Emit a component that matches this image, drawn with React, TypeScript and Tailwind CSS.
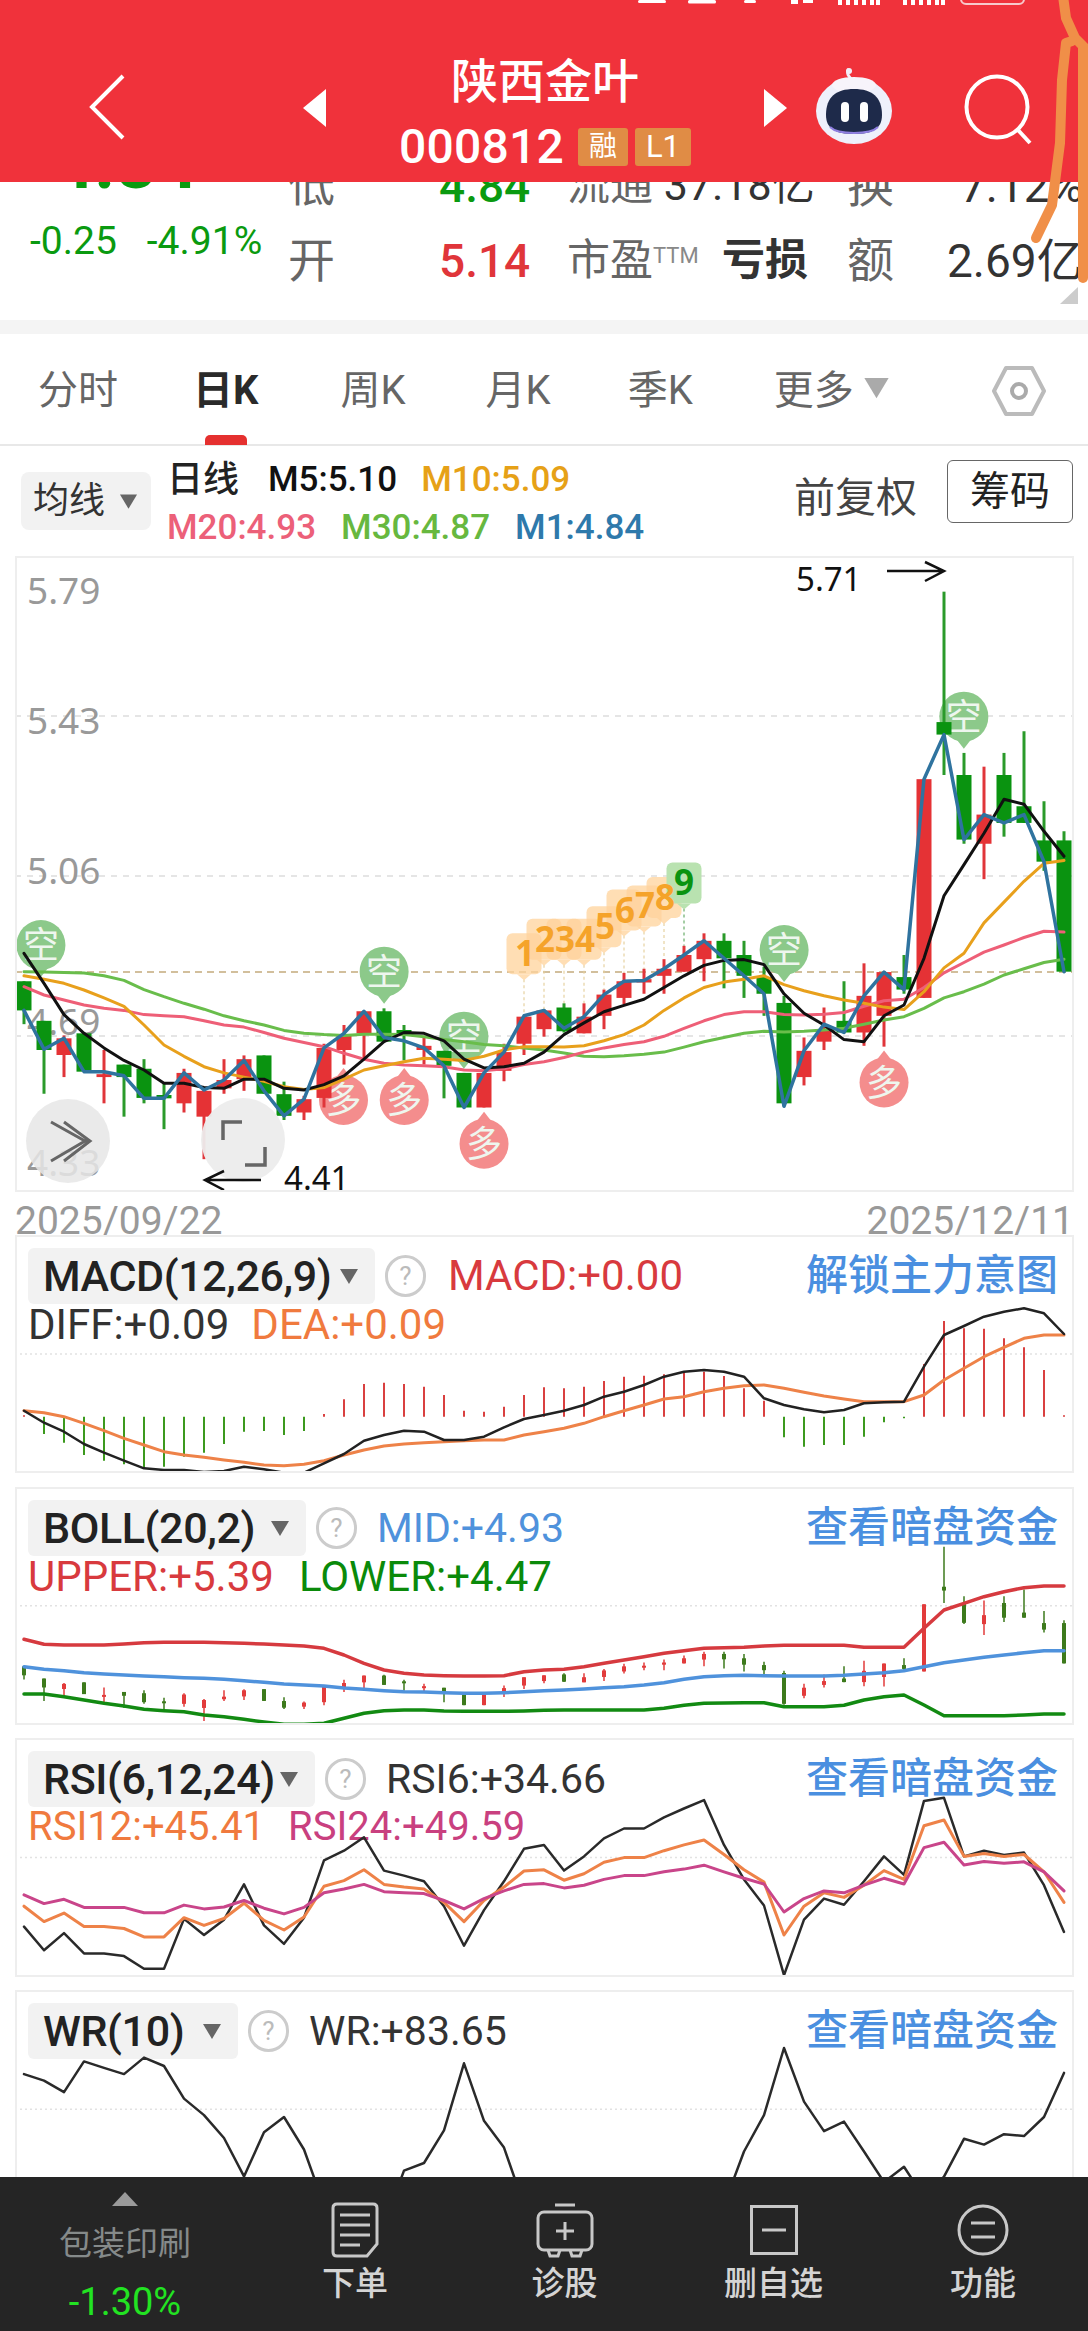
import React from "react";

const X = (i: number) => 24 + 20 * i;
const MY = (z: number) => 550 + z / 2.4;
const PY = (z: number) => 1220 + z / 3;
const RY = (z: number) => 1730 + z / 2.61;
const zx3 = (z: number) => z / 2.882;
const zx4 = (z: number) => 544 + z / 2.882;

type C = [number, number, number, number, number];
// 1 = red, 0 = green: colour, wick top, body top, body bottom, wick bottom
const candles: C[] = [
  [0,1035,1035,1105,1138],[0,1130,1130,1200,1305],[1,1165,1172,1212,1265],[0,1160,1160,1252,1252],[1,1200,1258,1265,1328],
  [0,1235,1235,1265,1360],[0,1222,1245,1315,1328],[0,1280,1308,1316,1390],[1,1245,1255,1328,1350],[1,1290,1298,1360,1462],
  [1,1222,1272,1292,1305],[1,1213,1222,1270,1298],[0,1213,1213,1305,1305],[0,1276,1306,1358,1368],[1,1310,1318,1350,1368],
  [1,1185,1195,1315,1338],[1,1140,1165,1200,1235],[1,1107,1107,1160,1222],[0,1100,1107,1180,1180],[0,1140,1152,1160,1225],
  [1,1170,1190,1200,1235],[0,1202,1202,1238,1316],[0,1255,1255,1338,1338],[1,1255,1255,1338,1338],[1,1185,1205,1250,1275],
  [1,1120,1120,1185,1212],[1,1105,1105,1150,1168],[0,1088,1098,1155,1158],[1,1088,1120,1160,1160],[1,1055,1067,1118,1150],
  [1,1015,1035,1075,1090],[1,1005,1030,1038,1065],[1,982,1005,1022,1065],[1,950,972,1012,1012],[1,920,938,982,1035],
  [0,920,938,980,1052],[0,938,972,1022,1075],[0,1000,1025,1065,1118],[0,1070,1087,1328,1335],[1,1170,1202,1265,1285],
  [1,1098,1150,1180,1200],[0,1035,1130,1158,1160],[1,992,1070,1158,1190],[1,1013,1013,1118,1192],[0,972,1025,1055,1065],
  [1,550,550,1075,1075],[0,100,413,443,540],[0,487,540,695,705],[1,520,635,705,790],[0,487,540,655,688],
  [0,435,615,655,655],[0,603,697,748,770],[0,675,697,1012,1012],
];

const m1 = [1105,1198,1172,1252,1252,1262,1316,1316,1255,1296,1272,1225,1298,1358,1318,1195,1160,1107,1170,1178,1195,1238,1338,1255,1205,1118,1105,1148,1120,1067,1035,1033,1005,972,938,980,1022,1065,1335,1202,1138,1158,1070,1013,1055,550,443,695,635,655,635,748,1012];
const m5 = [968,1040,1115,1160,1195,1225,1248,1280,1280,1290,1292,1270,1270,1292,1296,1283,1262,1222,1180,1158,1160,1178,1222,1243,1240,1232,1205,1163,1135,1108,1093,1078,1050,1022,997,985,983,995,1065,1112,1140,1175,1180,1118,1092,980,830,755,680,598,610,675,735];
const m10 = [1022,1030,1040,1056,1075,1095,1140,1188,1215,1240,1255,1265,1275,1288,1295,1290,1270,1248,1238,1228,1220,1222,1225,1215,1200,1192,1192,1193,1190,1178,1163,1140,1105,1075,1050,1037,1030,1022,1043,1058,1070,1080,1088,1097,1103,1060,1003,968,895,845,795,752,745];
const m20 = [1048,1068,1080,1092,1100,1105,1115,1118,1120,1130,1140,1145,1158,1172,1182,1192,1208,1222,1232,1236,1238,1240,1248,1250,1245,1235,1228,1218,1205,1195,1187,1180,1167,1148,1130,1115,1108,1108,1115,1116,1114,1110,1095,1082,1078,1050,1015,990,965,948,930,915,917];
const m30 = [1012,1013,1014,1015,1022,1033,1055,1072,1088,1102,1118,1130,1140,1153,1160,1163,1165,1162,1162,1163,1168,1175,1180,1187,1190,1195,1200,1207,1215,1216,1214,1210,1205,1193,1180,1170,1160,1155,1157,1155,1152,1148,1138,1128,1120,1100,1075,1060,1042,1020,1005,990,982];

const hist = [586,642,668,705,722,733,742,740,710,698,672,635,633,645,633,582,538,492,488,492,500,525,572,575,560,525,502,505,500,483,470,467,463,457,455,468,505,542,652,680,675,675,650,607,595,432,303,325,326,355,382,450,586];
const diff = [572,608,635,672,698,722,745,750,750,756,753,740,748,758,758,730,702,662,645,632,635,660,660,650,622,597,585,572,555,530,515,495,470,455,450,455,470,535,555,568,577,570,550,547,545,440,345,318,290,275,265,280,342];
const dea = [572,578,590,610,632,655,675,695,705,712,720,727,735,737,733,722,705,690,678,672,668,665,662,660,660,645,635,625,610,590,572,555,537,530,515,505,497,495,505,517,528,537,545,545,545,525,480,445,410,382,355,345,345];

const upper = [1258,1273,1275,1275,1275,1272,1268,1267,1267,1267,1268,1270,1272,1275,1278,1285,1305,1330,1350,1360,1365,1367,1368,1368,1367,1355,1350,1348,1340,1330,1320,1310,1300,1292,1285,1283,1282,1278,1276,1276,1276,1276,1282,1282,1282,1225,1170,1150,1130,1115,1103,1098,1098];
const mid = [1340,1348,1352,1358,1362,1365,1368,1370,1373,1375,1378,1382,1387,1392,1395,1398,1404,1408,1412,1415,1416,1418,1420,1420,1418,1415,1412,1410,1407,1403,1400,1395,1388,1378,1370,1367,1366,1367,1368,1368,1368,1366,1362,1358,1352,1340,1328,1320,1312,1305,1298,1292,1292];
const lower = [1422,1422,1430,1440,1450,1458,1468,1472,1475,1485,1490,1498,1506,1513,1513,1510,1495,1480,1472,1470,1470,1473,1474,1474,1474,1473,1471,1470,1470,1470,1470,1470,1465,1456,1450,1449,1448,1448,1460,1460,1460,1456,1440,1430,1425,1455,1487,1487,1487,1487,1485,1482,1482];

const rsi6 = [513,575,530,583,583,590,623,623,493,535,495,403,510,558,490,340,315,280,367,380,395,460,563,470,395,310,300,367,330,283,257,257,228,205,183,300,390,458,640,495,440,456,395,330,378,185,177,330,315,326,320,405,527];
const rsi12 = [460,500,478,513,513,518,540,540,490,510,492,452,497,522,488,408,393,365,403,410,415,450,500,445,410,368,365,392,375,345,333,333,315,300,287,325,365,397,535,460,425,437,405,367,390,250,235,330,322,330,325,370,450];
const rsi24 = [430,453,442,463,463,463,477,477,457,467,462,445,465,480,463,425,415,403,422,425,427,445,467,440,420,403,401,412,405,390,380,380,370,363,353,370,387,402,475,440,420,425,405,387,402,307,293,352,343,348,344,370,420];
const wr = [898,915,945,865,882,898,855,877,962,1005,1065,1165,1050,1010,1095,1240,1290,1320,1290,1150,1130,1045,870,1020,1090,1240,1320,1340,1340,1320,1300,1300,1320,1340,1320,1240,1100,1005,830,970,1047,1022,1100,1180,1140,1220,1166,1067,1082,1055,1060,1010,895];

const pts = (a: number[], f: (z: number) => number) => a.map((z, i) => `${X(i)},${f(z).toFixed(1)}`).join(" ");

function Line({ a, f, c, w = 3 }: { a: number[]; f: (z: number) => number; c: string; w?: number }) {
  return <polyline points={pts(a, f)} fill="none" stroke={c} strokeWidth={w} strokeLinejoin="round" strokeLinecap="round" />;
}

function Bubble({ x, y, t }: { x: number; y: number; t: "空" | "多" }) {
  const up = t === "多";
  const c = up ? "#f48d8d" : "#8cc98a";
  return (
    <g>
      <ellipse cx={x} cy={y} rx={24.5} ry={25} fill={c} />
      <path d={up ? `M${x - 7} ${y - 23}L${x} ${y - 32}L${x + 7} ${y - 23}Z` : `M${x - 7} ${y + 23}L${x} ${y + 32}L${x + 7} ${y + 23}Z`} fill={c} />
      <text x={x} y={y + 13} textAnchor="middle" fontSize={36} fill="#eef6ee">{t}</text>
    </g>
  );
}

const nums: [number, number, number, number][] = [
  [25, 920, 1120, 1], [26, 885, 1105, 2], [27, 885, 1088, 3], [28, 885, 1088, 4], [29, 855, 1055, 5],
  [30, 815, 1015, 6], [31, 805, 1005, 7], [32, 785, 982, 8], [33, 750, 950, 9],
];

function NumMark({ n }: { n: [number, number, number, number] }) {
  const [i, top, end, d] = n;
  const x = X(i);
  const y = MY(top);
  const nine = d === 9;
  const bg = nine ? "#b9e2b0" : "#ffd39c";
  return (
    <g opacity={nine ? 1 : 0.75}>
      <line x1={x} x2={x} y1={y + 46} y2={MY(end)} stroke={nine ? "#86bd86" : "#e6cf9c"} strokeWidth={1.5} strokeDasharray="3 3" />
      <rect x={x - 17.5} y={y} width={35} height={41} rx={6} fill={bg} />
      <path d={`M${x - 7} ${y + 41}L${x} ${y + 47}L${x + 7} ${y + 41}Z`} fill={bg} />
    </g>
  );
}

function MainChart() {
  return (
    <svg className="absolute left-0 top-0" width={1055} height={632} viewBox="17 558 1055 632">
      {[716, 876, 1036].map((y) => (
        <line key={y} x1={15} x2={1075} y1={y} y2={y} stroke="#dddddd" strokeWidth={1.5} strokeDasharray="6 6" />
      ))}
      <g fill="#999999" fontSize={37} fontFamily="'Noto Sans',sans-serif">
        <text x={27} y={604}>5.79</text>
        <text x={27} y={734}>5.43</text>
        <text x={27} y={884}>5.06</text>
        <text x={27} y={1035}>4.69</text>
        <text x={27} y={1176}>4.33</text>
      </g>
      <line x1={15} x2={1075} y1={972} y2={972} stroke="#c4ab7c" strokeWidth={1.5} strokeDasharray="7 5" />

      <Bubble x={zx3(118)} y={MY(948)} t="空" />
      <Bubble x={zx3(1107)} y={MY(1012)} t="空" />
      <Bubble x={zx3(1337)} y={MY(1168)} t="空" />
      <Bubble x={zx4(692)} y={MY(960)} t="空" />
      <Bubble x={zx4(1210)} y={MY(400)} t="空" />
      <Bubble x={zx3(990)} y={MY(1320)} t="多" />
      <Bubble x={zx3(1165)} y={MY(1320)} t="多" />
      <Bubble x={zx3(1395)} y={MY(1425)} t="多" />
      <Bubble x={zx4(980)} y={MY(1278)} t="多" />

      {nums.map((n) => <NumMark key={n[3]} n={n} />)}

      {candles.map((c, i) => {
        const col = c[0] ? "#e53235" : "#0a9310";
        return (
          <g key={i}>
            <line x1={X(i)} x2={X(i)} y1={MY(c[1])} y2={MY(c[4])} stroke={c[0] ? "#e0353a" : "#2a9a2a"} strokeWidth={3} />
            <rect x={X(i) - 7.5} y={MY(c[2])} width={15} height={Math.max(MY(c[3]) - MY(c[2]), 2)} fill={col} />
          </g>
        );
      })}

      <Line a={m30} f={MY} c="#69bd4b" />
      <Line a={m20} f={MY} c="#ee5f77" />
      <Line a={m10} f={MY} c="#e8a01c" />
      <Line a={m5} f={MY} c="#111111" />
      <Line a={m1} f={MY} c="#2f739f" w={3.5} />

      <g fontSize={35} fontWeight={700} fill="#f5a32a" textAnchor="middle" fontFamily="'Noto Sans',sans-serif">
        {nums.slice(0, 8).map((n) => (
          <text key={n[3]} x={X(n[0]) + 1} y={MY(n[1]) + 33}>{n[3]}</text>
        ))}
        <text x={X(33)} y={MY(750) + 32} fill="#0a9310">9</text>
      </g>

      <text x={796} y={591} fontSize={33} fill="#111111" fontFamily="'Noto Sans',sans-serif">5.71</text>
      <path d="M887 571H943M925 562L944 571L925 581" fill="none" stroke="#111111" strokeWidth={2.5} />

      <ellipse cx={68} cy={1141} rx={42} ry={42} fill="#e6e6e6" opacity={0.85} />
      <path d="M51 1122L85 1141L51 1161M64 1122L90 1141L64 1161" fill="none" stroke="#666666" strokeWidth={3} />
      <ellipse cx={243} cy={1140} rx={42} ry={42} fill="#ececec" opacity={0.95} />
      <path d="M223 1140V1122H242M265 1147V1165H245" fill="none" stroke="#666666" strokeWidth={3.5} />

      <text x={284} y={1190} fontSize={33} fill="#111111" fontFamily="'Noto Sans',sans-serif">4.41</text>
      <path d="M261 1180H205M224 1171L205 1180L224 1190" fill="none" stroke="#111111" strokeWidth={2.5} />
    </svg>
  );
}

function Tri({ c = "#666666", w = 20, h = 15 }: { c?: string; w?: number; h?: number }) {
  return (
    <svg width={w} height={h} viewBox="0 0 20 15">
      <path d="M1 0H19L10 15Z" fill={c} />
    </svg>
  );
}

function Pill({ label, w }: { label: string; w: string }) {
  return (
    <div className={`flex items-center justify-between h-[56px] bg-[#f2f2f2] rounded-md pl-[15px] pr-[16px] text-[43px] tracking-[-0.4px] font-medium text-[#222222] ${w}`}>
      <span className="whitespace-nowrap">{label}</span>
      <Tri />
    </div>
  );
}

function Help() {
  return (
    <div className="ml-[10px] flex items-center justify-center w-[41px] h-[42px] rounded-full border-[3px] border-[#cccccc] text-[26px] leading-none text-[#bbbbbb]">?</div>
  );
}

function Link({ t }: { t: string }) {
  return <span className="ml-auto text-[42px] leading-none font-medium text-[#4a8fe0] whitespace-nowrap">{t}</span>;
}

function Panel({ h, top, children, header, className }: { h: string; top: number; children: React.ReactNode; header: React.ReactNode; className?: string }) {
  return (
    <section className={`relative mx-[15px] w-[1059px] border-2 border-[#eeeeee] overflow-hidden ${h} ${className ?? ""}`}>
      <div className="pt-[11px] pl-[11px] pr-[14px]">{header}</div>
      <svg className="absolute left-0 top-0" width={1055} height={240} viewBox={`17 ${top + 2} 1055 240`}>
        {children}
      </svg>
    </section>
  );
}

function Dot({ y }: { y: number }) {
  return <line x1={15} x2={1075} y1={y} y2={y} stroke="#e2e2e2" strokeWidth={1.5} strokeDasharray="2 3" />;
}

function MacdChart() {
  return (
    <>
      <Dot y={PY(402)} />
      {hist.map((z, i) => (
        <line key={i} x1={X(i)} x2={X(i)} y1={PY(590)} y2={PY(z)} strokeWidth={2} stroke={z > 590 ? "#3c9a1e" : "#d94040"} />
      ))}
      <Line a={dea} f={PY} c="#ee8248" w={3} />
      <Line a={diff} f={PY} c="#222222" w={2.5} />
    </>
  );
}

function BollChart() {
  const f = (z: number) => PY(980 + (z - 100) * 0.384);
  return (
    <>
      <Dot y={PY(1157)} />
      {candles.map((c, i) => {
        const col = c[0] ? "#e23b3b" : "#3d7a1c";
        return (
          <g key={i}>
            <line x1={X(i)} x2={X(i)} y1={f(c[1])} y2={f(c[4])} stroke={col} strokeWidth={1.5} />
            <rect x={X(i) - 2} y={f(c[2])} width={4} height={Math.max(f(c[3]) - f(c[2]), 2)} fill={col} />
          </g>
        );
      })}
      <Line a={upper} f={PY} c="#d63a3f" w={3.5} />
      <Line a={mid} f={PY} c="#4f92dc" w={3.5} />
      <Line a={lower} f={PY} c="#128a12" w={3.5} />
    </>
  );
}

function RsiChart() {
  return (
    <>
      <Dot y={RY(333)} />
      <Line a={rsi6} f={RY} c="#2a2a2a" w={2.5} />
      <Line a={rsi12} f={RY} c="#ee8248" w={3} />
      <Line a={rsi24} f={RY} c="#c9458a" w={3} />
    </>
  );
}

function WrChart() {
  return (
    <>
      <Dot y={RY(990)} />
      <Line a={wr} f={RY} c="#2a2a2a" w={2.5} />
    </>
  );
}

function Robot() {
  return (
    <svg width={84} height={80} viewBox="0 0 84 80">
      <path d="M42 14C36 10 34 6 37 2" fill="none" stroke="#f2eef8" strokeWidth={3} />
      <circle cx={37} cy={4} r={3} fill="#f2eef8" />
      <ellipse cx={42} cy={44} rx={38} ry={33} fill="#eef0fb" />
      <ellipse cx={42} cy={18} rx={22} ry={8} fill="#f7f4fb" />
      <path d="M14 48C14 30 24 22 42 22C60 22 70 30 70 48C70 62 60 67 42 67C24 67 14 62 14 48Z" fill="#1e2a4a" />
      <path d="M18 60C26 68 58 68 66 60" fill="none" stroke="#8f7fe0" strokeWidth={2} />
      <rect x={29} y={35} width={8} height={20} rx={4} fill="#ffffff" />
      <rect x={48} y={35} width={8} height={20} rx={4} fill="#ffffff" />
    </svg>
  );
}

function StatusBar() {
  return (
    <div className="relative h-[5px] overflow-hidden">
      <div className="absolute left-[60px] top-[-31px] text-[30px] leading-[40px] font-medium text-white">14:16</div>
      <svg className="absolute left-0 top-0" width={1088} height={6}>
        <g fill="#ffffff">
          <rect x={638} y={0} width={28} height={3} rx={1.5} />
          <rect x={688} y={0} width={28} height={3.5} rx={1.5} />
          <rect x={744} y={0} width={12} height={3} rx={1.5} />
          <rect x={791} y={0} width={7} height={4} />
          <rect x={803} y={0} width={10} height={3} />
          <path d="M838 0h4v5h-4zM846 0h4v5h-4zM854 0h4v5h-4zM862 0h4v5h-4zM870 0h4v5h-4zM876 0h4v5h-4zM903 0h4v5h-4zM911 0h4v5h-4zM919 0h4v5h-4zM927 0h4v5h-4zM935 0h4v5h-4zM941 0h4v5h-4z" />
        </g>
        <rect x={961} y={-10} width={63} height={14} rx={5} fill="none" stroke="#f7c9cb" strokeWidth={2} />
      </svg>
    </div>
  );
}

function Header() {
  return (
    <header className="h-[182px] bg-[#f0323b] text-white relative z-10">
      <StatusBar />
      <div className="flex items-center h-[177px] pt-[36px] pl-[88px]">
        <svg width={40} height={68} viewBox="0 0 40 68" className="mt-[-10px]">
          <path d="M36 3L5 34L36 65" fill="none" stroke="#ffffff" strokeWidth={4} transform="translate(-1 0)" />
        </svg>
        <svg width={24} height={38} viewBox="0 0 24 38" className="ml-[175px] mt-[-8px]">
          <path d="M23 0V38L0 19Z" fill="#ffffff" />
        </svg>
        <div className="w-[436px] flex flex-col items-center">
          <div className="text-[47px] leading-[54px] font-medium mt-[2px]">陕西金叶</div>
          <div className="flex items-center mt-[14px]">
            <span className="text-[48px] leading-[48px] font-medium tracking-[0.2px]">000812</span>
            <span className="ml-[14px] flex items-center justify-center w-[50px] h-[38px] rounded-[3px] bg-[#e08c45] text-[28px] leading-none">融</span>
            <span className="ml-[7px] flex items-center justify-center w-[56px] h-[38px] rounded-[3px] bg-[#e08c45] text-[31px] leading-none">L1</span>
          </div>
        </div>
        <svg width={24} height={38} viewBox="0 0 24 38" className="mt-[-8px]">
          <path d="M1 0V38L24 19Z" fill="#ffffff" />
        </svg>
        <div className="ml-[25px] mt-[-10px]"><Robot /></div>
        <svg width={72} height={72} viewBox="0 0 72 72" className="ml-[68px] mt-[-3px]">
          <circle cx={33} cy={33} r={30.5} fill="none" stroke="#ffffff" strokeWidth={4} />
          <path d="M54 56L66 69" stroke="#ffffff" strokeWidth={4} />
        </svg>
      </div>
    </header>
  );
}

function Stats() {
  return (
    <div className="relative h-[138px] overflow-hidden bg-white">
      <div className="mt-[-34px] grid grid-cols-[288px_151px_128px_280px_100px_141px] grid-rows-[75px_75px] items-center text-[#333333]">
        <div className="pl-[53px] text-[72px] leading-none font-bold text-[#0a9a10] mt-[-44px]">4.84</div>
        <div className="text-[47px] leading-none text-[#666666] mt-[-3px]">低</div>
        <div className="text-[46px] leading-none font-medium text-[#0a9a10]">4.84</div>
        <div className="text-[43px] leading-none whitespace-nowrap"><span className="text-[#666666]">流通</span> <span>37.18亿</span></div>
        <div className="text-[47px] leading-none text-[#666666]">换</div>
        <div className="text-[46px] leading-none pl-[13px] whitespace-nowrap">7.12%</div>

        <div className="flex pl-[30px] gap-[30px] text-[39px] leading-none text-[#0a9a10] mt-[-38px]">
          <span>-0.25</span>
          <span>-4.91%</span>
        </div>
        <div className="text-[47px] leading-none text-[#666666]">开</div>
        <div className="text-[46px] leading-none font-medium text-[#e0353a]">5.14</div>
        <div className="flex items-center justify-between pr-[39px] whitespace-nowrap">
          <span className="text-[43px] leading-none text-[#666666]">市盈<span className="text-[22px] align-[12px] text-[#888888]">TTM</span></span>
          <span className="text-[43px] leading-none font-bold text-[#333333]">亏损</span>
        </div>
        <div className="text-[47px] leading-none text-[#666666]">额</div>
        <div className="text-[46px] leading-none whitespace-nowrap">2.69亿</div>
      </div>
      <svg className="absolute left-[1060px] top-[105px]" width={18} height={17} viewBox="0 0 18 17">
        <path d="M18 0V17H0Z" fill="#cccccc" />
      </svg>
    </div>
  );
}

function Tabs() {
  return (
    <nav className="flex items-center h-[112px] pt-[4px] border-b-2 border-[#e8e8e8] pl-[38px] text-[40px] leading-none text-[#666666]">
      <span>分时</span>
      <span className="relative ml-[75px] font-bold text-[#2a2a2a]">
        日K
        <span className="absolute left-[12px] top-[64px] w-[42px] h-[10px] rounded-t-[5px] bg-[#e5302f]" />
      </span>
      <span className="ml-[82px]">周K</span>
      <span className="ml-[80px]">月K</span>
      <span className="ml-[77px]">季K</span>
      <span className="ml-[81px]">更多</span>
      <span className="ml-[9px] mt-[-6px]"><Tri c="#aaaaaa" w={27} h={22} /></span>
      <svg width={56} height={52} viewBox="0 0 56 52" className="ml-auto mr-[41px]">
        <path d="M15 3H41L53 26L41 49H15L3 26Z" fill="none" stroke="#bbbbbb" strokeWidth={4} strokeLinejoin="round" />
        <circle cx={28} cy={26} r={7} fill="none" stroke="#aaaaaa" strokeWidth={4} />
      </svg>
    </nav>
  );
}

function MaRow() {
  return (
    <div className="flex items-center h-[110px] pl-[21px] pr-[15px]">
      <div className="flex items-center justify-between w-[130px] h-[58px] pl-[12px] pr-[13px] rounded-lg bg-[#f2f2f2] text-[36px] text-[#333333]">
        <span>均线</span>
        <Tri c="#666666" w={19} h={15} />
      </div>
      <div className="ml-[16px] pt-[6px] text-[35px] leading-[48px] font-medium">
        <div className="flex items-center">
          <span className="text-[36px] text-[#222222] w-[72px]">日线</span>
          <span className="ml-[29px] text-[#111111]">M5:5.10</span>
          <span className="ml-[24px] text-[#e6a117]">M10:5.09</span>
        </div>
        <div className="flex items-center">
          <span className="text-[#ec6079]">M20:4.93</span>
          <span className="ml-[25px] text-[#67b83f]">M30:4.87</span>
          <span className="ml-[25px] text-[#2e79ab]">M1:4.84</span>
        </div>
      </div>
      <span className="ml-auto text-[41px] leading-none text-[#444444] mt-[-5px]">前复权</span>
      <button className="ml-[30px] mt-[-19px] w-[126px] h-[63px] rounded-md border border-[#666666] bg-white text-[40px] leading-none text-[#222222]">筹码</button>
    </div>
  );
}

function FootItem({ w, label, children }: { w: string; label: string; children: React.ReactNode }) {
  return (
    <div className={`flex flex-col items-center ${w}`}>
      <div className="h-[56px] mt-[25px] flex items-center justify-center">{children}</div>
      <span className="mt-[6px] text-[33px] leading-[40px] font-medium text-[#d4d4d4]">{label}</span>
    </div>
  );
}

function Footer() {
  const s = { fill: "none", stroke: "#c8c8c8", strokeWidth: 3 };
  return (
    <footer className="flex h-[154px] bg-[#252525] shrink-0">
      <div className="w-[250px] flex flex-col items-center">
        <svg width={26} height={14} viewBox="0 0 26 14" className="mt-[15px]"><path d="M13 0L26 14H0Z" fill="#9a9a9a" /></svg>
        <span className="mt-[18px] text-[33px] leading-[40px] text-[#858a8a]">包装印刷</span>
        <span className="mt-[18px] text-[38px] leading-[40px] text-[#22e322]">-1.30%</span>
      </div>
      <FootItem w="w-[210px]" label="下单">
        <svg width={50} height={56} viewBox="0 0 50 56">
          <path d="M7 2H43Q47 2 47 6V42L37 54H7Q3 54 3 50V6Q3 2 7 2Z" {...s} />
          <path d="M10 13H40M10 23H40M10 33H40M10 43H30" {...s} />
        </svg>
      </FootItem>
      <FootItem w="w-[209px]" label="诊股">
        <svg width={58} height={56} viewBox="0 0 58 56">
          <path d="M19 3H39" {...s} />
          <rect x={2} y={10} width={54} height={38} rx={6} {...s} />
          <path d="M12 48L14 54H22L24 48M34 48L36 54H44L46 48" {...s} />
          <path d="M29 20V38M20 29H38" {...s} />
        </svg>
      </FootItem>
      <FootItem w="w-[209px]" label="删自选">
        <svg width={48} height={50} viewBox="0 0 48 50">
          <rect x={1.5} y={1.5} width={45} height={47} {...s} />
          <path d="M12 25H36" {...s} />
        </svg>
      </FootItem>
      <FootItem w="w-[210px]" label="功能">
        <svg width={52} height={52} viewBox="0 0 52 52">
          <circle cx={26} cy={26} r={24} {...s} />
          <path d="M14 19H38M14 33H38" {...s} />
        </svg>
      </FootItem>
    </footer>
  );
}

function Scribble() {
  return (
    <svg className="absolute left-0 top-0 z-20 pointer-events-none" width={1088} height={300} viewBox="0 0 1088 300">
      <g fill="none" stroke="#f08f48" strokeWidth={10} strokeLinecap="round" strokeLinejoin="round">
        <path d="M1063 -4L1066 18L1075 38L1092 55" />
        <path d="M1072 41L1066 43L1062 80L1060 143L1052 205L1036 238" />
        <path d="M1083 47V278" />
      </g>
    </svg>
  );
}

export default function App() {
  return (
    <div className="relative w-[1088px] h-[2331px] overflow-hidden flex flex-col bg-white font-[family-name:Roboto,'Noto_Sans_CJK_SC',sans-serif]">
      <Header />
      <Stats />
      <div className="h-[14px] bg-[#f4f4f4] shrink-0" />
      <Tabs />
      <MaRow />

      <section className="relative mx-[15px] w-[1059px] h-[636px] border-2 border-[#eeeeee] shrink-0">
        <MainChart />
      </section>

      <div className="flex justify-between h-[43px] pt-[6px] pl-[15px] pr-[14px] text-[39px] leading-[46px] text-[#999999] shrink-0">
        <span>2025/09/22</span>
        <span>2025/12/11</span>
      </div>

      <Panel
        h="h-[238px] shrink-0"
        top={1235}
        header={
          <>
            <div className="flex items-center">
              <Pill label="MACD(12,26,9)" w="w-[347px]" />
              <Help />
              <span className="ml-[22px] text-[42px] leading-none text-[#d83a3e]">MACD:+0.00</span>
              <Link t="解锁主力意图" />
            </div>
            <div className="mt-[1px] flex text-[42px] leading-[40px]">
              <span className="text-[#333333]">DIFF:+0.09</span>
              <span className="ml-[22px] text-[#f07a3e]">DEA:+0.09</span>
            </div>
          </>
        }
      >
        <MacdChart />
      </Panel>

      <div className="h-[14px] shrink-0" />
      <Panel
        h="h-[238px] shrink-0"
        top={1487}
        header={
          <>
            <div className="flex items-center">
              <Pill label="BOLL(20,2)" w="w-[278px]" />
              <Help />
              <span className="ml-[20px] text-[41px] leading-none text-[#4f92dc]">MID:+4.93</span>
              <Link t="查看暗盘资金" />
            </div>
            <div className="mt-[1px] flex text-[42px] leading-[40px]">
              <span className="text-[#d83a3e]">UPPER:+5.39</span>
              <span className="ml-[25px] text-[#0a8a0a]">LOWER:+4.47</span>
            </div>
          </>
        }
      >
        <BollChart />
      </Panel>

      <div className="h-[13px] shrink-0" />
      <Panel
        h="h-[239px] shrink-0"
        top={1738}
        header={
          <>
            <div className="flex items-center">
              <Pill label="RSI(6,12,24)" w="w-[287px]" />
              <Help />
              <span className="ml-[20px] text-[41px] leading-none text-[#333333]">RSI6:+34.66</span>
              <Link t="查看暗盘资金" />
            </div>
            <div className="flex text-[40px] leading-[40px]">
              <span className="text-[#f07a3e]">RSI12:+45.41</span>
              <span className="ml-[23px] text-[#c9407f]">RSI24:+49.59</span>
            </div>
          </>
        }
      >
        <RsiChart />
      </Panel>

      <div className="h-[13px] shrink-0" />
      <Panel
        h="flex-1 min-h-0 border-b-0"
        top={1990}
        header={
          <div className="flex items-center">
            <Pill label="WR(10)" w="w-[210px]" />
            <Help />
            <span className="ml-[20px] text-[41px] leading-none text-[#333333]">WR:+83.65</span>
            <Link t="查看暗盘资金" />
          </div>
        }
      >
        <WrChart />
      </Panel>

      <Footer />
      <Scribble />
    </div>
  );
}
